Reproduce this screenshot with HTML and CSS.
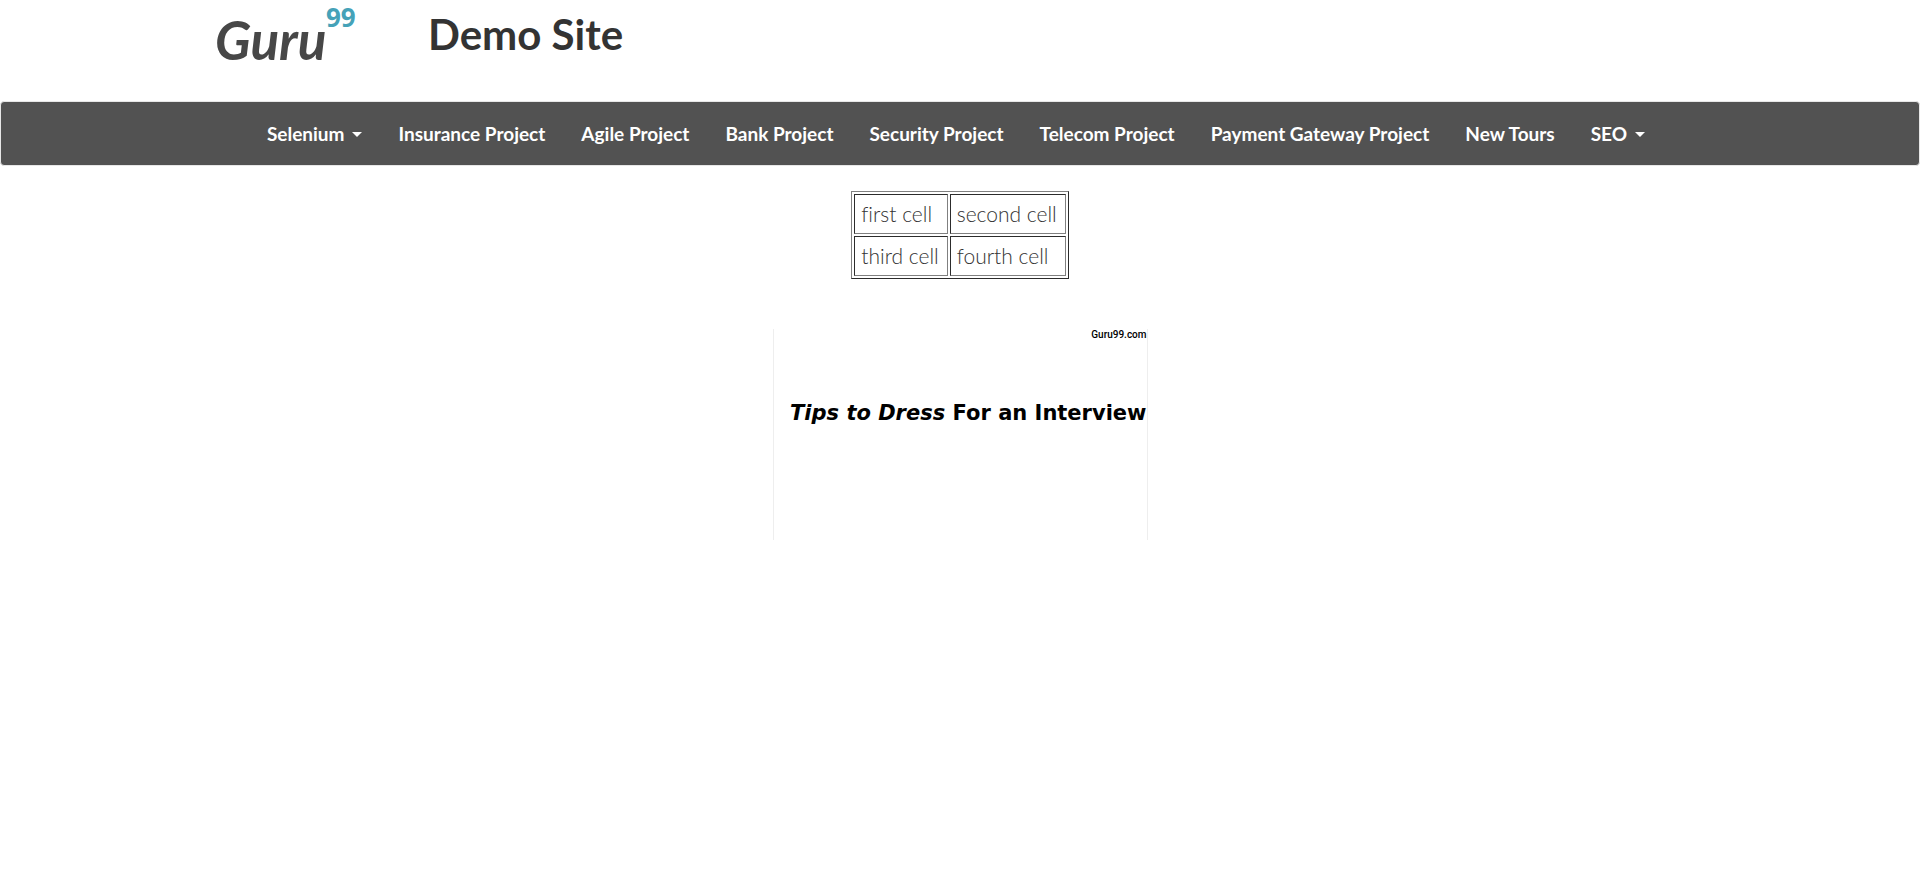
FILE: index.html
```html
<!DOCTYPE html>
<html lang="en">
<head>
<meta charset="utf-8">
<title>Guru99 Demo Site</title>
<meta name="viewport" content="width=device-width, initial-scale=1">
<link rel="stylesheet" href="styles.css">
</head>
<body>
<header class="header">
  <a class="logo" href="#" aria-label="Guru99">
    <svg class="logo-art" viewBox="0 0 150 68" role="img" aria-label="Guru99">
      <text class="logo-name" x="0" y="60">Guru</text>
      <text class="logo-number" x="111" y="27">99</text>
    </svg>
  </a>
  <h1 class="title">Demo Site</h1>
</header>
<nav class="navbar">
  <ul class="menu">
    <li><a href="#">Selenium <span class="caret"></span></a></li>
    <li><a href="#">Insurance Project</a></li>
    <li><a href="#">Agile Project</a></li>
    <li><a href="#">Bank Project</a></li>
    <li><a href="#">Security Project</a></li>
    <li><a href="#">Telecom Project</a></li>
    <li><a href="#">Payment Gateway Project</a></li>
    <li><a href="#">New Tours</a></li>
    <li><a href="#">SEO <span class="caret"></span></a></li>
  </ul>
</nav>
<main class="content">
  <table class="cells">
    <tbody>
      <tr><td>first cell</td><td>second cell</td></tr>
      <tr><td>third cell</td><td>fourth cell</td></tr>
    </tbody>
  </table>
  <section class="banner">
    <p class="banner-site">Guru99.com</p>
    <p class="banner-text"><em>Tips to Dress</em> For an Interview</p>
  </section>
</main>
</body>
</html>
```
FILE: styles.css
```css
* {
  box-sizing: border-box;
}

body {
  margin: 0;
  background: #fff;
  color: #333;
  font-family: Lato, "Open Sans", sans-serif;
  font-size: 21px;
  line-height: 30px;
}

.header {
  display: flex;
  align-items: flex-start;
  gap: 63px;
  padding: 0 215px 33px;
}

.logo-art {
  display: block;
  width: 150px;
  height: 68px;
  overflow: visible;
}

.logo-name {
  fill: #474747;
  font: italic 700 53px Lato, sans-serif;
}

.logo-number {
  fill: #45a2b8;
  font: 700 26px "Open Sans", sans-serif;
}

.title {
  margin: 12px 0 0;
  font-size: 42px;
  font-weight: 700;
  line-height: 44px;
}

.navbar {
  margin: 0 0 25px;
  border: 1px solid #e7e7e7;
  border-radius: 4px;
  background: #525252;
}

.menu {
  display: flex;
  justify-content: center;
  margin: 0;
  padding: 0 8px 0 0;
  list-style: none;
}

.menu a {
  display: flex;
  align-items: center;
  gap: 8px;
  padding: 17px 18px 16px;
  color: #fff;
  font-size: 19px;
  font-weight: 700;
  text-decoration: none;
  white-space: nowrap;
}

.caret {
  border-top: 5px solid #fff;
  border-right: 5px solid transparent;
  border-left: 5px solid transparent;
}

.content {
  display: flex;
  flex-direction: column;
  align-items: center;
  gap: 50px;
}

.cells {
  border: 1px solid;
  border-color: #808080 #2c2c2c #2c2c2c #808080;
  border-collapse: separate;
  border-spacing: 2px;
  font-weight: 300;
  font-variant-ligatures: none;
}

.cells td {
  padding: 4px 8px 4px 6px;
  border: 1px solid;
  border-color: #2c2c2c #808080 #808080 #2c2c2c;
}

.banner {
  width: 375px;
  max-width: 100%;
  min-height: 211px;
  border: solid #eee;
  border-width: 0 1px;
  color: #000;
}

.banner-site {
  margin: 0 0 60px;
  font: 500 10px/12px Roboto, sans-serif;
  text-align: right;
}

.banner-text {
  margin: 0;
  font: 700 21px/24px "DejaVu Sans", sans-serif;
  text-align: right;
  white-space: nowrap;
}
```
